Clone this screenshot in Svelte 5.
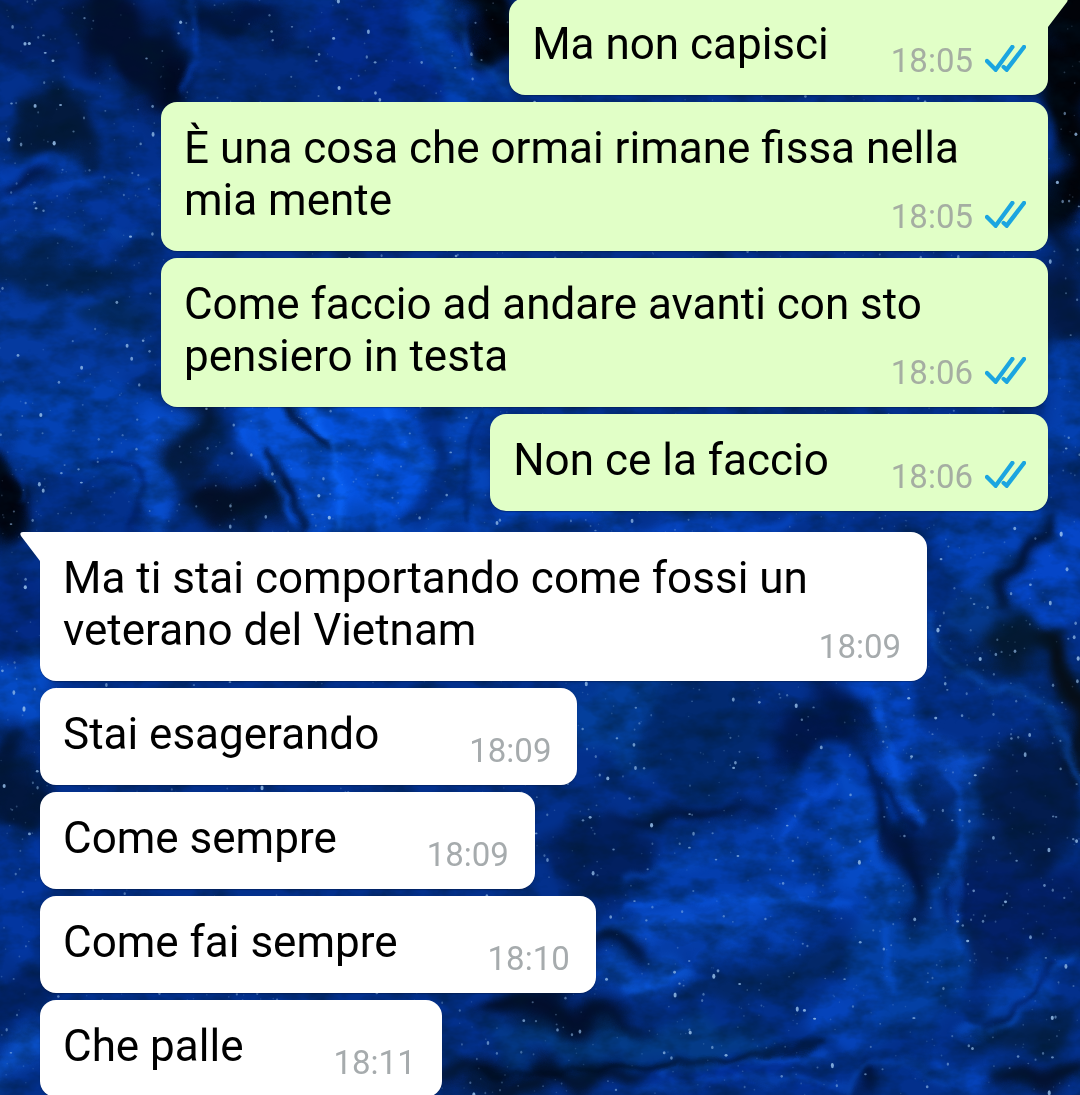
<script lang="ts">
    type Message = { text: string; time: string };
    type Group = { from: 'me' | 'them'; messages: Message[] };

    const groups: Group[] = [
        {
            from: 'me',
            messages: [
                { text: 'Ma non capisci', time: '18:05' },
                { text: 'È una cosa che ormai rimane fissa nella mia mente', time: '18:05' },
                { text: 'Come faccio ad andare avanti con sto pensiero in testa', time: '18:06' },
                { text: 'Non ce la faccio', time: '18:06' },
            ],
        },
        {
            from: 'them',
            messages: [
                { text: 'Ma ti stai comportando come fossi un veterano del Vietnam', time: '18:09' },
                { text: 'Stai esagerando', time: '18:09' },
                { text: 'Come sempre', time: '18:09' },
                { text: 'Come fai sempre', time: '18:10' },
                { text: 'Che palle', time: '18:11' },
            ],
        },
    ];

    // Soft patches of paint: x, y, rx, ry, rotation, color
    const patches: [number, number, number, number, number, string][] = [
        [60, 20, 110, 50, 0, '#02226a'],
        [130, 50, 34, 80, -35, '#020f30'],
        [60, 125, 34, 40, 0, '#031a3e'],
        [250, 60, 70, 70, 0, '#032c80'],
        [230, 15, 60, 14, 10, '#011440'],
        [395, 50, 90, 60, 0, '#032b8e'],
        [450, 60, 26, 90, -20, '#0341b4'],
        [500, 20, 26, 70, -35, '#01030a'],
        [180, 85, 12, 40, 0, '#01081e'],
        [80, 215, 110, 40, -15, '#04369c'],
        [30, 170, 50, 14, -10, '#0544c0'],
        [25, 182, 20, 8, -20, '#010a28'],
        [60, 265, 80, 20, 0, '#032456'],
        [60, 340, 100, 55, 0, '#053aa0'],
        [120, 320, 40, 20, 0, '#032a62'],
        [90, 430, 120, 50, 10, '#0442b4'],
        [190, 430, 18, 60, 10, '#04183a'],
        [160, 470, 14, 70, 10, '#0850d4'],
        [300, 450, 50, 90, -35, '#0752da'],
        [370, 450, 50, 70, -20, '#0552de'],
        [230, 500, 46, 22, 0, '#030f28'],
        [470, 440, 20, 70, 10, '#0545ba'],
        [8, 500, 24, 50, 0, '#01040f'],
        [420, 522, 130, 12, 0, '#0445b8'],
        [650, 520, 200, 12, 0, '#0546c4'],
        [15, 640, 40, 60, 0, '#032a85'],
        [15, 690, 40, 30, 0, '#054ac4'],
        [15, 790, 30, 60, 0, '#02173e'],
        [15, 900, 30, 60, 0, '#0336a0'],
        [15, 1000, 40, 30, 0, '#02236a'],
        [15, 1065, 50, 14, -25, '#0a50c8'],
        [1070, 60, 26, 190, 0, '#010309'],
        [1062, 310, 26, 60, 0, '#031a48'],
        [1065, 400, 26, 60, 0, '#0440b0'],
        [1000, 540, 60, 40, 0, '#0442b8'],
        [1055, 580, 34, 60, 20, '#0546c8'],
        [985, 600, 40, 34, 0, '#05388c'],
        [1022, 565, 9, 55, 15, '#010a20'],
        [1020, 650, 60, 22, 15, '#041a34'],
        [1076, 710, 20, 80, -15, '#060e18'],
        [650, 720, 100, 50, 0, '#043f9c'],
        [700, 735, 60, 60, 0, '#022a70'],
        [820, 735, 60, 44, 0, '#01174c'],
        [690, 815, 80, 10, -12, '#02143a'],
        [600, 860, 60, 30, 0, '#022060'],
        [840, 800, 80, 50, 0, '#033cae'],
        [900, 740, 24, 100, -28, '#0545c2'],
        [780, 880, 140, 60, -12, '#043eae'],
        [700, 920, 120, 18, -6, '#084cca'],
        [868, 890, 24, 110, -8, '#064ac4'],
        [975, 860, 60, 120, 0, '#042260'],
        [905, 860, 14, 70, -18, '#02123a'],
        [952, 850, 10, 110, 4, '#0543ac'],
        [958, 748, 24, 7, 0, '#0f5ff0'],
        [1040, 800, 50, 60, 0, '#031c4e'],
        [1030, 910, 70, 50, 0, '#032068'],
        [615, 940, 32, 10, 0, '#010f30'],
        [640, 970, 60, 16, -10, '#084cc4'],
        [900, 970, 56, 70, 0, '#0440a4'],
        [760, 975, 80, 20, -12, '#032868'],
        [560, 1015, 90, 18, 5, '#020e2c'],
        [640, 1045, 150, 16, 0, '#043c88'],
        [540, 1078, 130, 8, 0, '#030912'],
        [850, 1010, 30, 26, 0, '#0543ba'],
        [1020, 990, 50, 12, -35, '#0645b8'],
        [1030, 1030, 60, 20, 0, '#032252'],
        [740, 1075, 90, 12, -4, '#03309a'],
        [860, 1075, 12, 24, 0, '#02123a'],
        [965, 1075, 40, 18, 15, '#0543bc'],
        [1050, 1080, 50, 14, 0, '#03102c'],
    ];

    // Thin veins over the patches: path, color, width
    const veins: [string, string, number][] = [
        ['M440 0 Q470 60 510 92', '#0a4aa8', 5],
        ['M460 10 Q475 60 470 95', '#0a49c4', 4],
        ['M190 0 Q200 50 185 90', '#053db0', 8],
        ['M0 205 Q70 170 160 190', '#0a4cc8', 4],
        ['M0 240 Q60 225 160 236', '#0848b0', 4],
        ['M290 402 Q310 440 330 450', '#01081f', 8],
        ['M270 450 Q290 490 305 530', '#011036', 8],
        ['M310 405 Q350 480 340 530', '#0d66fa', 9],
        ['M390 410 Q400 440 430 470', '#0d62f5', 8],
        ['M370 420 Q385 470 380 525', '#0a5cf0', 6],
        ['M240 430 Q275 470 290 525', '#0a5cf0', 6],
        ['M480 420 Q460 460 468 520', '#011a5c', 4],
        ['M0 450 Q30 450 20 500', '#043aa5', 5],
        ['M90 462 Q150 450 142 490 T130 530', '#011858', 5],
        ['M925 620 Q960 690 1010 690 T1080 790', '#0c55c8', 6],
        ['M875 690 Q885 770 920 820', '#0b58e4', 11],
        ['M865 755 Q890 800 910 830', '#01113c', 6],
        ['M942 765 L956 785 L966 755', '#0b50d0', 3],
        ['M958 780 Q965 850 952 960', '#0a55d8', 5],
        ['M780 850 Q790 800 830 790', '#0a50d8', 8],
        ['M620 880 Q720 850 800 860', '#0748bc', 6],
        ['M620 990 Q660 985 690 970', '#0d5ce0', 5],
        ['M630 910 Q720 890 850 905', '#0a58e5', 6],
        ['M872 830 Q895 920 890 990', '#0a55d8', 6],
        ['M1080 955 Q1040 965 1025 1000 T960 1030', '#0953cf', 6],
        ['M1048 960 Q1030 1010 985 1025', '#01124a', 5],
        ['M660 1075 Q740 1052 830 1060', '#0a53d8', 6],
        ['M640 1090 Q720 1076 850 1084', '#0a4dc8', 5],
        ['M850 1095 Q850 1060 880 1060 T950 1090', '#0848b8', 5],
        ['M480 1070 Q620 1078 820 1045', '#01050f', 5],
    ];

    // Small repeatable generator, so the sky is the same on every load
    let seed = 41;
    function random() {
        seed = (seed * 16807) % 2147483647;
        return seed / 2147483647;
    }

    const stars = Array.from({ length: 3400 }, () => {
        const bright = random() ** 4;
        return {
            x: random() * 1080,
            y: random() * 1095,
            rx: 0.8 + bright * 0.8,
            ry: 0.8 + bright * random() * 2,
            opacity: 0.16 + bright * 0.7,
        };
    });
</script>

<svg class="wallpaper" viewBox="0 0 1080 1095" preserveAspectRatio="xMidYMid slice" aria-hidden="true">
    <defs>
        <filter id="paint" x="-10%" y="-10%" width="120%" height="120%" color-interpolation-filters="sRGB">
            <feGaussianBlur stdDeviation="8" result="soft" />
            <feTurbulence type="fractalNoise" baseFrequency="0.016" numOctaves="2" seed="7" result="noise" />
            <feDisplacementMap in="soft" in2="noise" scale="70" xChannelSelector="R" yChannelSelector="G" />
        </filter>
        <filter id="vein" x="-10%" y="-10%" width="120%" height="120%" color-interpolation-filters="sRGB">
            <feGaussianBlur stdDeviation="3" result="soft" />
            <feTurbulence type="fractalNoise" baseFrequency="0.03" numOctaves="2" seed="3" result="noise" />
            <feDisplacementMap in="soft" in2="noise" scale="22" xChannelSelector="R" yChannelSelector="G" />
        </filter>
        <filter id="grain" x="0" y="0" width="100%" height="100%" color-interpolation-filters="sRGB">
            <feTurbulence type="fractalNoise" baseFrequency="0.03 0.05" numOctaves="4" seed="12" />
            <feColorMatrix values="0 0 0 0 0  0 0 0 0 0.09  0 0 0 0 0.16  2 0 0 0 -0.75" />
        </filter>
    </defs>
    <rect width="1080" height="1095" fill="#03308c" />
    <g filter="url(#paint)">
        <rect x="-100" y="-100" width="1280" height="1295" fill="#03308c" />
        {#each patches as [x, y, rx, ry, angle, color]}
            <ellipse cx={x} cy={y} {rx} {ry} fill={color} transform="rotate({angle} {x} {y})" />
        {/each}
    </g>
    <g filter="url(#vein)" fill="none" stroke-linecap="round" opacity="0.8">
        {#each veins as [d, color, width]}
            <path {d} stroke={color} stroke-width={width} />
        {/each}
    </g>
    <rect width="1080" height="1095" filter="url(#grain)" opacity="0.5" />
    <g fill="#9cc4ee">
        {#each stars as star}
            <ellipse cx={star.x} cy={star.y} rx={star.rx} ry={star.ry} opacity={star.opacity} />
        {/each}
    </g>
</svg>

<main class="chat">
    {#each groups as group}
        <ul class="group {group.from}">
            {#each group.messages as message, i}
                <li class="bubble" class:first={i === 0}>
                    {#if i === 0}
                        <svg class="tail" viewBox="0 0 21 32" aria-hidden="true">
                            <path d="M21 0H3Q-1 0 1 4L20 29Q21 31 21 32Z" />
                        </svg>
                    {/if}
                    {message.text}
                    <span class="meta">
                        <time>{message.time}</time>
                        {#if group.from === 'me'}
                            <svg class="ticks" viewBox="0 0 123 81" role="img" aria-label="Letto">
                                <path d="M6 48L32 74L82 6M56 66L65 74L117 6" />
                            </svg>
                        {/if}
                    </span>
                </li>
            {/each}
        </ul>
    {/each}
</main>

<style>
    :global(body) {
        background: #03308c;
    }

    .wallpaper {
        position: fixed;
        inset: 0;
        width: 100%;
        height: 100%;
    }

    /* The list is a little taller than the window and sits centered in it */
    .chat {
        position: relative;
        box-sizing: border-box;
        height: 100vh;
        padding: 0 32px 0 40px;
        overflow: hidden;
        display: flex;
        flex-direction: column;
        justify-content: center;
        gap: 21px;
        font-family: Roboto, "Noto Sans", sans-serif;
        font-size: 44px;
        line-height: 52px;
        color: #000;
    }

    .group {
        display: flex;
        flex-direction: column;
        flex-shrink: 0;
        align-items: flex-start;
        gap: 7px;
        margin: 0;
        padding: 0;
        list-style: none;
    }
    .group.me {
        align-items: flex-end;
    }

    .bubble {
        position: relative;
        box-sizing: border-box;
        max-width: 88%;
        padding: 20px 26px 14px 23px;
        border-radius: 16px;
        background: #fff;
        box-shadow: 0 1px 1px rgba(0, 20, 60, 0.4);
    }
    .me .bubble {
        padding-right: 22px;
        background: #e1ffc7;
    }
    .them .first {
        border-top-left-radius: 0;
    }
    .me .first {
        border-top-right-radius: 0;
    }

    .tail {
        position: absolute;
        top: 0;
        right: 100%;
        width: 21px;
        height: 32px;
        margin-right: -1px;
        fill: #fff;
    }
    .me .tail {
        right: auto;
        left: 100%;
        margin-left: -1px;
        fill: #e1ffc7;
        transform: scaleX(-1);
    }

    /* Floats beside the last line of text when there is room */
    .meta {
        float: right;
        display: flex;
        align-items: center;
        gap: 12px;
        margin: 23px 0 0 90px;
        font-size: 33px;
        line-height: 40px;
        color: #a6abad;
    }
    .me .meta {
        margin-left: 62px;
        color: #a5aea2;
    }

    .ticks {
        width: 41px;
        height: 27px;
        margin-bottom: 6px;
        fill: none;
        stroke: #1ba5e0;
        stroke-width: 13;
        stroke-linecap: round;
    }
</style>
